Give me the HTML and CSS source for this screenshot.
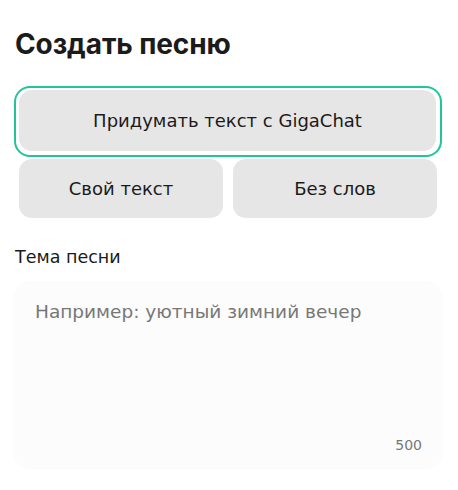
FILE: index.html
```html
<!DOCTYPE html>
<html lang="ru">
<head>
    <meta charset="UTF-8">
    <title>Создать песню</title>
    <link rel="stylesheet" href="styles.css">
</head>
<body>
    <div class="song-form">
        <h1>Создать песню</h1>

        <div class="mode-main">
            <button class="mode-button">Придумать текст с GigaChat</button>
        </div>

        <div class="mode-row">
            <button class="mode-button">Свой текст</button>
            <button class="mode-button">Без слов</button>
        </div>

        <label class="field-label" for="theme">Тема песни</label>
        <div class="field">
            <textarea id="theme" placeholder="Например: уютный зимний вечер"></textarea>
            <span class="counter">500</span>
        </div>
    </div>
</body>
</html>
```

FILE: styles.css
```css
:root {
    --text: #1b1b1b;
    --muted: #777777;
    --chip-bg: #e6e6e6;
    --field-bg: #fcfcfc;
    --accent: #21c59a;
}

body {
    margin: 0;
    background: #ffffff;
    color: var(--text);
    font-family: "DejaVu Sans", sans-serif;
}

.song-form {
    padding: 0 16px 0 14px;
}

h1 {
    margin: 0;
    padding: 28px 0 0 1px;
    font-family: Inter, sans-serif;
    font-size: 28px;
    font-weight: 700;
    line-height: 32px;
    letter-spacing: -0.1px;
}

.mode-main {
    margin-top: 26px;
    border: 2px solid var(--accent);
    border-radius: 16px;
    padding: 2px 4px 4px 3px;
}

.mode-button {
    display: flex;
    align-items: center;
    justify-content: center;
    width: 100%;
    border: none;
    border-radius: 13px;
    background: var(--chip-bg);
    color: var(--text);
    font-family: "DejaVu Sans", sans-serif;
    font-size: 18px;
}

.mode-main .mode-button {
    height: 61px;
}

.mode-row {
    display: grid;
    grid-template-columns: 1fr 1fr;
    gap: 10px;
    margin-top: 2px;
    padding: 0 5px;
}

.mode-row .mode-button {
    height: 59px;
}

.field-label {
    display: block;
    margin: 29px 0 0 1px;
    font-size: 17.5px;
    line-height: 20px;
}

.field {
    position: relative;
    margin-top: 14px;
    height: 188px;
    border-radius: 16px;
    background: var(--field-bg);
}

.field textarea {
    display: block;
    box-sizing: border-box;
    width: 100%;
    height: 100%;
    padding: 20px 21px;
    border: none;
    background: transparent;
    resize: none;
    outline: none;
    color: var(--text);
    font-family: "DejaVu Sans", sans-serif;
    font-size: 18.5px;
}

.field textarea::placeholder {
    color: var(--muted);
}

.counter {
    position: absolute;
    right: 20px;
    bottom: 16px;
    color: var(--muted);
    font-size: 14px;
}
```
